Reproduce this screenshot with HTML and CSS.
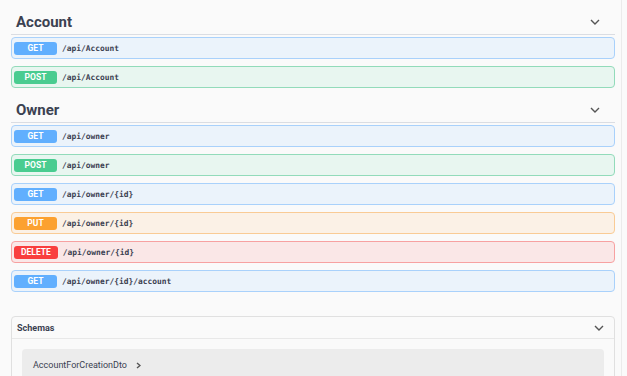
FILE: index.html
```html
<!DOCTYPE html>
<html lang="en">
<head>
    <meta charset="UTF-8">
    <meta name="viewport" content="width=device-width, initial-scale=1.0">
    <title>Swagger UI</title>
    <link rel="stylesheet" href="styles.css">
</head>
<body>
    <div class="page">
        <!-- Account -->
        <section class="tag">
            <div class="tag-header">
                <h2>Account</h2>
                <svg class="chevron" width="10" height="6" viewBox="0 0 10 6"><path d="M1 1 L5 5 L9 1"/></svg>
            </div>
            <div class="op op-get"><span class="method">GET</span><span class="path">/api/Account</span></div>
            <div class="op op-post"><span class="method">POST</span><span class="path">/api/Account</span></div>
        </section>

        <!-- Owner -->
        <section class="tag">
            <div class="tag-header">
                <h2>Owner</h2>
                <svg class="chevron" width="10" height="6" viewBox="0 0 10 6"><path d="M1 1 L5 5 L9 1"/></svg>
            </div>
            <div class="op op-get"><span class="method">GET</span><span class="path">/api/owner</span></div>
            <div class="op op-post"><span class="method">POST</span><span class="path">/api/owner</span></div>
            <div class="op op-get"><span class="method">GET</span><span class="path">/api/owner/{id}</span></div>
            <div class="op op-put"><span class="method">PUT</span><span class="path">/api/owner/{id}</span></div>
            <div class="op op-delete"><span class="method">DELETE</span><span class="path">/api/owner/{id}</span></div>
            <div class="op op-get"><span class="method">GET</span><span class="path">/api/owner/{id}/account</span></div>
        </section>

        <!-- Schemas -->
        <section class="schemas">
            <div class="schemas-header">
                <span>Schemas</span>
                <svg class="chevron" width="10" height="6" viewBox="0 0 10 6"><path d="M1 1 L5 5 L9 1"/></svg>
            </div>
            <div class="schemas-body">
                <div class="model">
                    <span>AccountForCreationDto</span>
                    <svg class="arrow" width="5" height="7" viewBox="0 0 5 7"><path d="M1 1 L4 3.5 L1 6"/></svg>
                </div>
            </div>
        </section>
    </div>
</body>
</html>
```

FILE: styles.css
```css
/* reset */
* {
    margin: 0;
    padding: 0;
    box-sizing: border-box;
}

body {
    background: #fafafa;
    font-family: Roboto, "Liberation Sans", sans-serif;
    color: #3b4151;
}

.page {
    width: 622px;
    height: 376px;
    overflow: hidden;
    padding: 7px 6px 0 11px;
    border-right: 1px solid #ebebeb;
}

/* tag header */
.tag-header {
    display: flex;
    justify-content: space-between;
    align-items: center;
    padding: 5px 15px 2px 5px;
    border-bottom: 1px solid #dadde3;
    margin-bottom: 2px;
}

.tag-header h2 {
    font-size: 15px;
    line-height: 20px;
    font-weight: 700;
}

.chevron path,
.arrow path {
    fill: none;
    stroke: #555;
    stroke-width: 1.4;
}

/* operations */
.op {
    display: flex;
    align-items: center;
    height: 22px;
    border: 1px solid;
    border-radius: 4px;
    margin-bottom: 7px;
    padding-left: 2px;
}

.method {
    min-width: 43px;
    height: 13px;
    padding: 0 7px;
    border-radius: 3px;
    color: #fff;
    font-size: 8.5px;
    font-weight: 700;
    line-height: 13px;
    text-align: center;
}

.path {
    margin-left: 5px;
    font-family: "DejaVu Sans Mono", "Liberation Mono", monospace;
    font-size: 7.9px;
    font-weight: 700;
    color: #3b4151;
}

.op-get { background: #ebf3fb; border-color: #a9d1fb; }
.op-get .method { background: #61affe; }

.op-post { background: #e8f6f0; border-color: #92dbba; }
.op-post .method { background: #49cc90; }

.op-put { background: #fbf1e6; border-color: #f9cb95; }
.op-put .method { background: #fca130; }

.op-delete { background: #fae7e7; border-color: #f7a1a1; }
.op-delete .method { background: #f93e3e; }

/* schemas */
.schemas {
    margin-top: 24px;
    border: 1px solid #e0e0e0;
    border-radius: 4px;
    height: 80px;
}

.schemas-header {
    display: flex;
    justify-content: space-between;
    align-items: center;
    height: 22px;
    padding: 0 10px 0 5px;
    border-bottom: 1px solid #e8e8e8;
    font-size: 9px;
    font-weight: 700;
}

.schemas-body {
    padding: 10px 10px 0;
}

.model {
    display: flex;
    align-items: center;
    gap: 9px;
    height: 60px;
    padding: 11px 11px;
    background: #ececec;
    border-radius: 4px;
    font-size: 9px;
    line-height: 10px;
    align-items: flex-start;
}

.model .arrow {
    margin-top: 2px;
}
```
